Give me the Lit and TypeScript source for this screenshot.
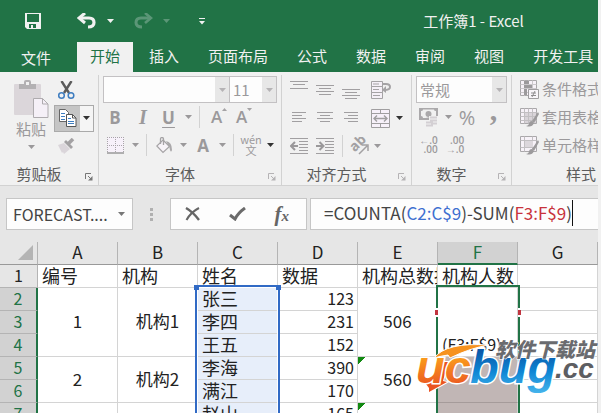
import { LitElement, html, svg, css, nothing } from "lit";
import { customElement, property } from "lit/decorators.js";
import { classMap } from "lit/directives/class-map.js";

const caret = (tone = "") => html`<svg class=${"caret " + tone} width="7" height="4" viewBox="0 0 7 4"><path d="M0 0h7L3.5 4z" fill="currentColor"/></svg>`;

const icon = (w: number, h: number, body: unknown) =>
  html`<svg width=${w} height=${h} viewBox=${`0 0 ${w} ${h}`} fill="none" aria-hidden="true">${body}</svg>`;

const save = icon(16, 16, svg`<path fill-rule="evenodd" fill="#f1f1f1" d="M0 0h16v16H2l-2-2zM2 1v8h12V1zM4 11v4h2v-3h2v3h3v-4z"/>`);
const undo = icon(20, 16, svg`<path d="M2 5h10q5 0 5 4.500T11 14" stroke="currentColor" stroke-width="3.200"/><path d="M8 0 2 5l6 5" stroke="currentColor" stroke-width="3"/>`);
const redo = icon(20, 16, svg`<path d="M18 5H8Q3 5 3 9.500T9 14" stroke="currentColor" stroke-width="3"/><path d="M12 0l6 5-6 5" stroke="currentColor" stroke-width="2.600"/>`);
const customise = icon(6, 7, svg`<path d="M0 .5h6" stroke="#f1f1f1"/><path d="M0 3h6L3 6.500z" fill="#f1f1f1"/>`);

const paste = icon(35, 39, svg`
  <rect y="4" width="27" height="31" rx="1" fill="#dbd6da"/>
  <path d="M5 9V4h5V2q0-2 2-2h3q2 0 2 2v2h5v5z" fill="#b3b1b3"/><rect x="12" y="2" width="3" height="3" fill="#f1f1f1"/>
  <path d="M19.500 18.500h9l5.500 5.500v13.500H19.500z" fill="#f5f0f7" stroke="#aeabae"/><path d="M28.500 18.500V24H34" stroke="#aeabae"/>`);
const scissors = icon(17, 19, svg`
  <path d="M3.500 0 11 12M13.500 0 6 12" stroke="#5b5b5b" stroke-width="2.400"/>
  <circle cx="3.500" cy="14.500" r="2.800" stroke="#3e7dc0" stroke-width="1.500"/><circle cx="13" cy="14.500" r="2.800" stroke="#3e7dc0" stroke-width="1.500"/>`);
const copy = icon(18, 18, svg`
  <path d="M.5.5h6L9.500 3.500v9h-9z" fill="#fff" stroke="#666"/><path d="M2 4.500h4M2 7.500h4M2 10.500h4" stroke="#3e7dc0"/>
  <path d="M7.500 5.500h6l3.500 3.500v8.500H7.500z" fill="#fff" stroke="#555"/><path d="M13.500 5.500V9H17" stroke="#555"/><path d="M9 9.500h3M9 12.500h6M9 14.500h6" stroke="#3e7dc0"/>`);
const brush = icon(17, 16, svg`
  <path d="M0 7l6-2 6 6-6 5-1-2-1 1z" fill="#dad5da"/><path d="M6 4l2-2 7 7-2 2z" fill="#a3a1a3"/><path d="M10 6l5-5" stroke="#a3a1a3" stroke-width="3.500"/>`);
const borders = icon(17, 17, svg`
  <rect width="17" height="16" fill="#f7f1fa"/><path d="M.5 0v16M8.500 0v16M16.500 0v16M0 .5h17M0 8.500h17" stroke="#a8a5a8" stroke-dasharray="1 1"/><path d="M0 16h17" stroke="#999" stroke-width="1.500"/>`);
const bucket = icon(17, 17, svg`
  <path d="M7 3l6.500 6.500L7 15.500.8 9z" fill="#f7f3f8" stroke="#a5a3a5" stroke-width="1.200"/><path d="M4.500 7V2q0-1.500 1.500-1.500T7.500 2v6" stroke="#a5a3a5" stroke-width="1.300"/><path d="M10 4q6 1 6 9-1 3-2 0 0-3-2-5z" fill="#aaa8aa"/>`);
const lines = (...rows: number[][]) => svg`${rows.map(([x, y, w]) => svg`<path d=${`M${x} ${y}.5h${w}`} stroke="#a19fa1"/>`)}`;
const alignTop = icon(18, 20, lines([0, 1, 18], [3, 4, 12], [0, 8, 18]));
const alignMiddle = icon(18, 20, lines([0, 5, 18], [3, 8, 12], [0, 11, 18], [3, 14, 12]));
const alignBottom = icon(18, 20, lines([0, 9, 18], [3, 12, 12], [0, 15, 18], [3, 18, 12]));
const alignLeft = icon(16, 16, lines([1, 2, 14], [1, 5, 10], [1, 8, 14], [1, 11, 10]));
const alignCenter = icon(16, 16, lines([0, 2, 16], [3, 5, 10], [0, 8, 16], [3, 11, 10]));
const alignRight = icon(16, 16, lines([1, 2, 14], [5, 5, 10], [1, 8, 14], [5, 11, 10]));
const outdent = icon(18, 17, svg`${lines([0, 0, 18], [9, 3, 9], [9, 6, 9], [9, 9, 9], [9, 12, 9], [0, 15, 18])}<path d="M8 8H2M5 4 1 8l4 4" stroke="#9a989a" stroke-width="2"/>`);
const indent = icon(18, 17, svg`${lines([0, 0, 18], [9, 3, 9], [9, 6, 9], [9, 9, 9], [9, 12, 9], [0, 15, 18])}<path d="M0 8h6M3.500 4l4 4-4 4" stroke="#9a989a" stroke-width="2"/>`);
const wrap = icon(20, 19, svg`
  <path d="M.5.5h11v5H.5zM.5 5.500h11v6H.5zM.5 11.500h11v6H.5z" fill="#f5f0f7" stroke="#a5a3a5"/><path d="M2 3h6M2 8.500h6M2 14.500h7" stroke="#a5a3a5"/>
  <path d="M12 3h3q4 0 4 3t-6 3" stroke="#a5a3a5" stroke-width="2"/><path d="M15 5l-4 4 4 3z" fill="#a5a3a5"/>`);
const merge = icon(19, 19, svg`
  <path d="M.5.5h18v18H.5zM.5 4.500h18M.5 14.500h18M9.500.5v4M9.500 14.500v4" fill="#f7f1fa" stroke="#a09ea0"/><path d="M3 9.500h13M6 6.500l-3 3 3 3M13 6.500l3 3-3 3" stroke="#a09ea0" stroke-width="1.400"/>`);
const orient = icon(20, 18, svg`
  <text x="2" y="15" transform="rotate(-45 4 12)" font-family="Open Sans" font-weight="700" font-size="14" fill="#a3a1a3">ab</text>
  <path d="M9 17 17 9M12 8h6v6" stroke="#a3a1a3" stroke-width="1.500"/>`);
const money = icon(19, 19, svg`
  <path d="M0 0h19v12H0z" fill="#aba9ab"/><path d="M2 3q2 0 2-1.500h11Q15 3 17 3v5h-5q-2 2-8 2Q4 8 2 8z" fill="#f1f1f1"/><circle cx="9.500" cy="6" r="3" fill="#aba9ab"/>
  <path d="M10 8h9v11H6v-7h4z" fill="#f1f1f1"/><path d="M11 9.500h7M11 12.500h7M7 14.500h7M7 17.500h7M12 15.500h6" stroke="#d3cfd3" stroke-width="2"/>`);
const launch = icon(8, 8, svg`<path d="M.5 6V.5H6" stroke="currentColor"/><path d="M3 3l3 3" stroke="currentColor"/><path d="M7.500 3v4.500H3z" fill="currentColor"/>`);
const gridBase = svg`<path d="M.5.5h16v15H.5z" fill="#f7f2f8" stroke="#aaa8aa"/>`;
const condition = icon(19, 19, svg`
  ${gridBase}<path d="M4.500.5v15M8.500.5v15M12.500.5v15M.5 4.500h16M.5 8.500h16M.5 12.500h16" stroke="#cbc8cb"/><path d="M4 1h5v3H4zM4 5h8v3H4zM4 9h3v6H4z" fill="#9c9a9c"/>
  <path d="M8.500 9.500h10v9h-10z" fill="#f8f5f9" stroke="#a09ea0"/><path d="M11 13h5M11 15.500h5M15 11l-3 6" stroke="#8e8c8e"/>`);
const styleBrush = svg`<path d="M18 4l-6 9 2 2 5-9z" fill="#9c9a9c"/><path d="M12 13q-3 0-3 3-1 2-3 2 6 2 8-3z" fill="#9c9a9c"/>`;
const tableFormat = icon(19, 19, svg`${gridBase}<path d="M4 5h12v10H4z" fill="#d9d4d9"/><path d="M4.500.5v15M8.500.5v15M12.500.5v15M.5 4.500h16M.5 8.500h16M.5 12.500h16" stroke="#c2bfc2"/>${styleBrush}`);
const cellStyle = icon(19, 19, svg`${gridBase}<path d="M4.500.5v15M12.500.5v15M.5 4.500h16M.5 11.500h16" stroke="#c2bfc2"/><path d="M5 5h8v6H5z" fill="#dcd7dc"/>${styleBrush}`);
const cross = icon(16, 14, svg`<path d="M1 1q7 4 13 12" stroke="#666" stroke-width="2.400"/><path d="M14 1Q6 5 1.500 13" stroke="#666" stroke-width="2"/>`);
const check = icon(17, 14, svg`<path d="M1 8l5 4Q9 6 16 1" stroke="#6b6b6b" stroke-width="3"/>`);

@customElement("ribbon-group")
class RibbonGroup extends LitElement {
  @property() label = "";
  @property({ type: Boolean }) active = false;
  @property({ type: Boolean }) plain = false;

  static styles = css`
    :host { display: flex; flex-direction: column; position: relative; height: 110px; box-sizing: border-box; padding-top: 1px; overflow: hidden; }
    .tools { height: 84px; }
    .label { margin-top: 3px; line-height: 22px; text-align: center; color: #5c5c5c; white-space: nowrap; padding-right: 20px; }
    .plain { padding: 0; margin-left: 54px; text-align: left; }
    .launch { position: absolute; right: 5px; bottom: 4px; padding: 0; border: 0; background: none; color: #b5b3b5; line-height: 0; }
    .active { color: #777; }
  `;

  render() {
    return html`
      <div class="tools"><slot></slot></div>
      <div class=${classMap({ label: true, plain: this.plain })}>${this.label}</div>
      ${this.plain ? nothing : html`<button class=${classMap({ launch: true, active: this.active })} aria-label=${this.label}>${launch}</button>`}
    `;
  }
}

@customElement("site-mark")
class SiteMark extends LitElement {
  static styles = css`
    :host { display: block; line-height: 0; pointer-events: none; }
    .word { font: italic bold 47px "Liberation Sans", sans-serif; paint-order: stroke; stroke: #fff; stroke-width: 3px; }
    .tail { font: italic bold 28px "Liberation Sans", sans-serif; fill: #5d5e62; paint-order: stroke; stroke: #fff; stroke-width: 2px; }
    .name { font: italic 900 20px "Noto Sans CJK SC", sans-serif; fill: #6a6b6f; paint-order: stroke; stroke: #fff; stroke-width: 1px; }
  `;

  render() {
    return html`<svg width="182" height="60" viewBox="0 0 182 60" role="img" aria-label="ucbug.cc">
      <defs>
        <linearGradient id="o" x1="0" y1="0" x2="0" y2="1"><stop offset="0.300" stop-color="#fba01c"/><stop offset="0.900" stop-color="#ea5322"/></linearGradient>
        <linearGradient id="b" x1="0" y1="0" x2="0" y2="1"><stop offset="0.200" stop-color="#0a58a8"/><stop offset="0.600" stop-color="#0f86d4"/><stop offset="1" stop-color="#45b4ec"/></linearGradient>
      </defs>
      <path d="M13 52l0-4-3-4 12-6 2-16h8l-5 19 4 1z" fill="#ea5322" stroke="#fff" stroke-width="2" paint-order="stroke"/>
      <text class="word" x="0" y="43" fill="url(#o)">uc</text>
      <text class="word" x="54" y="43" fill="url(#b)">bug</text>
      <path d="M18 18Q30 2 73 5 54 8 34 18l-2-3q-7 1-14 3z" fill="#f6921e" stroke="#fff" stroke-width="1"/>
      <text class="tail" x="139" y="38">.cc</text>
      <text class="name" x="79" y="17">软件下载站</text>
    </svg>`;
  }
}

interface Row { n: number; a?: string; b?: string; c: string; d: string; e?: string; span?: number; }

const rows: Row[] = [
  { n: 2, a: "1", b: "机构1", c: "张三", d: "123", e: "506", span: 3 },
  { n: 3, c: "李四", d: "231" },
  { n: 4, c: "王五", d: "152" },
  { n: 5, a: "2", b: "机构2", c: "李海", d: "390", e: "560", span: 2 },
  { n: 6, c: "满江", d: "170" },
  { n: 7, a: "", b: "", c: "赵山", d: "165", e: "", span: 1 },
];

@customElement("app-root")
class AppRoot extends LitElement {
  static styles = css`
    :host { display: block; height: 100vh; overflow: hidden; box-sizing: border-box; padding-right: 3px; background: #f1f1f1; font: 15px "Noto Sans CJK SC", sans-serif; color: #9b999b; }
    button { margin: 0; padding: 0; border: 0; background: none; font: inherit; color: inherit; display: grid; place-items: center; }
    svg { display: block; }
    .top { background: #217346; color: #f1f1f1; }
    .title { display: flex; align-items: center; height: 42px; }
    .quick { display: flex; align-items: center; padding-left: 25px; }
    .quick button { margin-right: 10px; }
    .quick .save { margin-right: 36px; }
    .quick .more { margin-right: 19px; }
    .quick .last { margin: 0 0 0 10px; }
    .dim { color: #5b9677; }
    .name { flex: 1; text-align: center; padding-left: 144px; line-height: 20px; }
    .tabs { display: flex; gap: 3px; height: 30px; white-space: nowrap; overflow: hidden; }
    .tabs button { padding: 0 13px 3px; flex: none; }
    .tabs .file { padding: 0 23px 0 21px; }
    .tabs .on { background: #f1f1f1; color: #217346; }
    .ribbon { display: flex; padding: 3px 0 0; height: 110px; border-bottom: 1px solid #d2d2d2; }
    ribbon-group { border-right: 1px solid #d2d2d2; flex: none; }
    .clip { width: 99px; }
    .font { width: 183px; }
    .align { width: 130px; }
    .number { width: 100px; }
    .styles { flex: 1; border: 0; }
    .clipboard { display: grid; grid-template-columns: 40px 41px; column-gap: 5px; padding-left: 9px; }
    .paste { grid-template-rows: 39px 20px 16px; height: 84px; align-content: start; padding: 4px 0 0 4px; line-height: 20px; }
    .side { display: grid; grid-template-rows: 28px 28px 28px; justify-items: start; align-items: center; }
    .side > button { padding-left: 4px; }
    .copy { display: flex; border: 1px solid #aaa; box-sizing: border-box; width: 40px; height: 27px; background: #f5f5f5; }
    .copy button { height: 25px; width: 25px; background: #c5c5c5; }
    .copy .drop { width: 13px; background: none; }
    .dark { color: #333; }
    .row { display: grid; height: 28px; align-items: center; justify-items: center; }
    .bar { width: 1px; height: 22px; background: #d2d2d2; }
    .f2 { grid-template-columns: 28px 28px 23px 16px 7px 32px 18px; padding-left: 2px; justify-content: start; }
    .f3 { grid-template-columns: 28px 13px 9px 27px 10px 30px 8px 14px 22px 16px; padding-left: 2px; justify-content: start; }
    .a1 { grid-template-columns: 32px 20px 32px 27px 10px; padding-left: 1px; justify-content: start; }
    .a3 { grid-template-columns: 32px 20px 14px 22px 12px; padding-left: 1px; justify-content: start; }
    .n2 { grid-template-columns: 33px 6px 32px 21px; justify-content: start; }
    .n3 { grid-template-columns: 33px 20px; justify-content: start; }
    .boxes { display: flex; padding: 0 4px; }
    .combo { display: flex; box-sizing: border-box; height: 27px; border: 1px solid #c3c1c3; background: #fdfdfd; flex: 1; min-width: 0; }
    .combo input { flex: 1; min-width: 0; width: 10px; border: 0; padding: 0 3px; background: none; font: inherit; color: inherit; outline: 0; }
    .combo button { width: 14px; background: #e7e7e7; color: #b5b3b5; }
    .size { flex: 0 0 47px; border-left: 0; }
    .letter { font: bold 17px "Open Sans", sans-serif; }
    .serif { font: italic bold 20px "Liberation Serif", serif; }
    .under { text-decoration: underline; text-underline-offset: 3px; }
    .grow { display: flex; align-items: flex-start; font: 600 17px "Open Sans", sans-serif; line-height: 24px; }
    .grow svg { margin-top: 3px; }
    .pinyin { font-size: 11px; line-height: 11px; text-align: center; }
    .percent { font: 20px "Open Sans", sans-serif; }
    .comma { font: bold 30px "Liberation Serif", serif; line-height: 14px; padding-bottom: 14px; }
    .decimal { font: 600 10px "Open Sans", sans-serif; line-height: 9px; white-space: pre; text-align: right; }
    .entry { display: flex; gap: 3px; height: 28px; padding-left: 8px; align-items: center; white-space: nowrap; line-height: 20px; padding-bottom: 2px; }
    .formula { display: flex; align-items: center; height: 56px; background: #e6e6e6; padding-left: 6px; box-sizing: border-box; color: #444; }
    .box { display: flex; align-items: center; box-sizing: border-box; height: 32px; border: 1px solid #c6c6c6; background: #fdfdfd; }
    .where { width: 127px; }
    .where input { flex: 1; width: 10px; min-width: 0; border: 0; padding: 0 0 0 6px; background: none; color: #444; font: 16px "Noto Sans CJK SC", sans-serif; outline: 0; }
    .where button { width: 22px; color: #777; }
    .dots { width: 37px; display: grid; place-items: center; }
    .acts { width: 137px; margin-right: 3px; justify-content: space-between; padding: 0 17px 0 14px; }
    .fx { font: italic bold 21px "Liberation Serif", serif; color: #666; }
    .small { font-size: 15px; }
    .input { flex: 1; border-right: 0; padding: 0 0 2px 13px; font-size: 17px; line-height: 26px; white-space: nowrap; outline: 0; overflow: hidden; }
    .blue { color: #3d6fd0; }
    .red { color: #c8323c; }
    .cursor { width: 1px; height: 26px; background: #111; }
    .sheet { width: 100%; table-layout: fixed; border-collapse: separate; border-spacing: 0; background: #fff; color: #222; font-size: 16px; line-height: 20px; white-space: nowrap; }
    .sheet th, .sheet td { box-sizing: border-box; height: 23px; padding: 0 4px 2px; border: solid #d4d4d4; border-width: 0 1px 1px 0; overflow: hidden; font-weight: 400; text-align: left; }
    .sheet thead th { background: #e6e6e6; border-color: #b4b4b4 #b4b4b4 #999; font-size: 17px; text-align: center; }
    .sheet tbody th { background: #e6e6e6; border-color: #b4b4b4; text-align: center; }
    .head { width: 38px; }
    .col { width: 80px; }
    .sheet .text { font-size: 18px; }
    .sheet .mid { text-align: center; font-size: 17px; }
    .sheet .num { text-align: right; padding-right: 3px; }
    .sheet thead .picked { background: #d2d2d2; color: #217346; border-bottom: 2px solid #217346; padding-bottom: 1px; }
    .sheet tbody .hit { background: #d2d2d2; color: #217346; border-right: 2px solid #217346; }
    .sheet .ref { background: #e7eefa; }
    .sheet .anchor { position: relative; overflow: visible; }
    .sheet .target { vertical-align: bottom; }
    .sheet .fill { background: #c1b6b5; border-bottom-color: #a59b9a; }
    .corner { margin: 0 0 0 auto; }
    .corner svg { margin-left: auto; }
    .sheet .warn { background: linear-gradient(135deg, #128a12 5px, transparent 5px); }
    .range { position: absolute; z-index: 1; top: -3px; left: -3px; right: -3px; height: 150px; border: 2px solid #316ac5; box-shadow: inset 0 0 0 1px #fff; }
    .range::before, .range::after { content: ""; position: absolute; top: -2px; left: -3px; width: 5px; height: 5px; background: #316ac5; }
    .range::after { left: auto; right: -3px; }
    .green { left: -2px; border-color: #217346; box-shadow: none; }
    .green::before, .green::after { top: 21px; width: 3px; background: #c13540; border: solid #fff; border-width: 2px 0; }
    .body { position: relative; }
    .mark { position: absolute; z-index: 2; left: 416px; top: 98px; }
  `;

  private row(r: Row) {
    const span = r.span ?? 1;
    return html`<tr>
      <th class="hit" scope="row">${r.n}</th>
      ${r.span ? html`<td class="mid" rowspan=${span}>${r.a}</td><td class="mid" rowspan=${span}>${r.b}</td>` : nothing}
      <td class=${classMap({ text: true, ref: true, anchor: r.n === 2 })}>${r.c}${r.n === 2 ? html`<span class="range"></span>` : nothing}</td>
      <td class="num">${r.d}</td>
      ${r.span
        ? html`<td class=${classMap({ mid: true, warn: r.n > 2 })} rowspan=${span}>${r.e}</td>
            ${r.n === 2
              ? html`<td class="anchor target" rowspan=${span}>(F3:F$9)<span class="range green"></span></td>`
              : html`<td class="fill" rowspan=${span}></td>`}`
        : nothing}
      <td></td>
    </tr>`;
  }

  render() {
    return html`
      <header class="top">
        <div class="title">
          <div class="quick">
            <button class="save" aria-label="保存">${save}</button>
            <button aria-label="撤消">${undo}</button>
            <button class="more" aria-label="撤消列表">${caret()}</button>
            <button class="dim" aria-label="恢复">${redo}</button>
            <button class="more dim" aria-label="恢复列表">${caret()}</button>
            <button class="last" aria-label="自定义">${customise}</button>
          </div>
          <div class="name">工作簿1 - Excel</div>
        </div>
        <nav class="tabs">
          <button class="file">文件</button>
          ${["开始", "插入", "页面布局", "公式", "数据", "审阅", "视图", "开发工具"].map((t, i) => html`<button class=${classMap({ on: i === 0 })}>${t}</button>`)}
        </nav>
      </header>
      <section class="ribbon">
        <ribbon-group class="clip" label="剪贴板" active>
          <div class="clipboard">
            <button class="paste">${paste}<span>粘贴</span>${caret()}</button>
            <div class="side">
              <button aria-label="剪切">${scissors}</button>
              <div class="copy"><button aria-label="复制">${copy}</button><button class="drop dark" aria-label="复制选项">${caret()}</button></div>
              <button aria-label="格式刷">${brush}</button>
            </div>
          </div>
        </ribbon-group>
        <ribbon-group class="font" label="字体">
          <div class="boxes">
            <div class="combo"><input aria-label="字体"><button aria-label="字体列表">${caret()}</button></div>
            <div class="combo size"><input aria-label="字号" .value=${"11"}><button aria-label="字号列表">${caret()}</button></div>
          </div>
          <div class="row f2">
            <button class="letter">B</button><button class="serif">I</button><button class="letter under">U</button><button aria-label="下划线">${caret()}</button><span class="bar"></span>
            <button class="grow">A${icon(5, 3, svg`<path d="M0 3h5L2.500 0z" fill="#a5a3a5"/>`)}</button>
            <button class="grow">A${icon(5, 3, svg`<path d="M0 0h5L2.500 3z" fill="#a5a3a5"/>`)}</button>
          </div>
          <div class="row f3">
            <button aria-label="边框">${borders}</button><button aria-label="边框列表">${caret()}</button><span class="bar"></span>
            <button aria-label="填充">${bucket}</button><button aria-label="填充列表">${caret()}</button>
            <button class="letter">A</button><button aria-label="颜色列表">${caret()}</button><span class="bar"></span>
            <button class="pinyin">wén<br>文</button><button class="dark" aria-label="拼音列表">${caret()}</button>
          </div>
        </ribbon-group>
        <ribbon-group class="align" label="对齐方式">
          <div class="row a1"><button aria-label="顶端">${alignTop}</button><button aria-label="垂直居中">${alignMiddle}</button><button aria-label="底端">${alignBottom}</button><button aria-label="换行">${wrap}</button></div>
          <div class="row a1"><button aria-label="左">${alignLeft}</button><button aria-label="中">${alignCenter}</button><button aria-label="右">${alignRight}</button><button aria-label="合并">${merge}</button><button class="dark" aria-label="合并列表">${caret()}</button></div>
          <div class="row a3"><button aria-label="减少缩进">${outdent}</button><button aria-label="增加缩进">${indent}</button><span class="bar"></span>
            <button aria-label="方向">${orient}</button><button aria-label="方向列表">${caret()}</button></div>
        </ribbon-group>
        <ribbon-group class="number" label="数字">
          <div class="boxes"><div class="combo"><input aria-label="数字格式" .value=${"常规"}><button aria-label="格式列表">${caret()}</button></div></div>
          <div class="row n2"><button aria-label="货币">${money}</button><button aria-label="货币列表">${caret()}</button><button class="percent">%</button><button class="comma">,</button></div>
          <div class="row n3"><button class="decimal">←.0
.00</button><button class="decimal">.00
→.0</button></div>
        </ribbon-group>
        <ribbon-group class="styles" label="样式" plain>
          <button class="entry">${condition}条件格式</button>
          <button class="entry">${tableFormat}套用表格格式</button>
          <button class="entry">${cellStyle}单元格样式</button>
        </ribbon-group>
      </section>
      <section class="formula">
        <div class="box where"><input aria-label="名称框" .value=${"FORECAST...."}><button aria-label="名称列表">${caret()}</button></div>
        <div class="dots">${icon(3, 13, svg`<path d="M0 0h3v3H0zM0 5h3v3H0zM0 10h3v3H0z" fill="#b0b0b0"/>`)}</div>
        <div class="box acts"><button aria-label="取消">${cross}</button><button aria-label="输入">${check}</button><button class="fx" aria-label="插入函数"><span>f<span class="small">x</span></span></button></div>
        <div class="box input" role="textbox" aria-label="编辑栏" contenteditable="true" spellcheck="false"><span>=COUNTA(</span><span class="blue">C2:C$9</span><span>)-SUM(</span><span class="red">F3:F$9</span><span>)</span><span class="cursor"></span></div>
      </section>
      <main class="body">
        <table class="sheet">
          <thead>
            <tr>
              <th class="head corner">${icon(15, 15, svg`<path d="M15 0v15H0z" fill="#b4b4b4"/>`)}</th>
              ${["A", "B", "C", "D", "E", "F"].map((c) => html`<th scope="col" class=${classMap({ col: true, picked: c === "F" })}>${c}</th>`)}
              <th scope="col">G</th>
            </tr>
          </thead>
          <tbody>
            <tr><th scope="row">1</th>${["编号", "机构", "姓名", "数据", "机构总数据", "机构人数", ""].map((t) => html`<td class="text">${t}</td>`)}</tr>
            ${rows.map((r) => this.row(r))}
          </tbody>
        </table>
        <site-mark class="mark"></site-mark>
      </main>
    `;
  }
}
